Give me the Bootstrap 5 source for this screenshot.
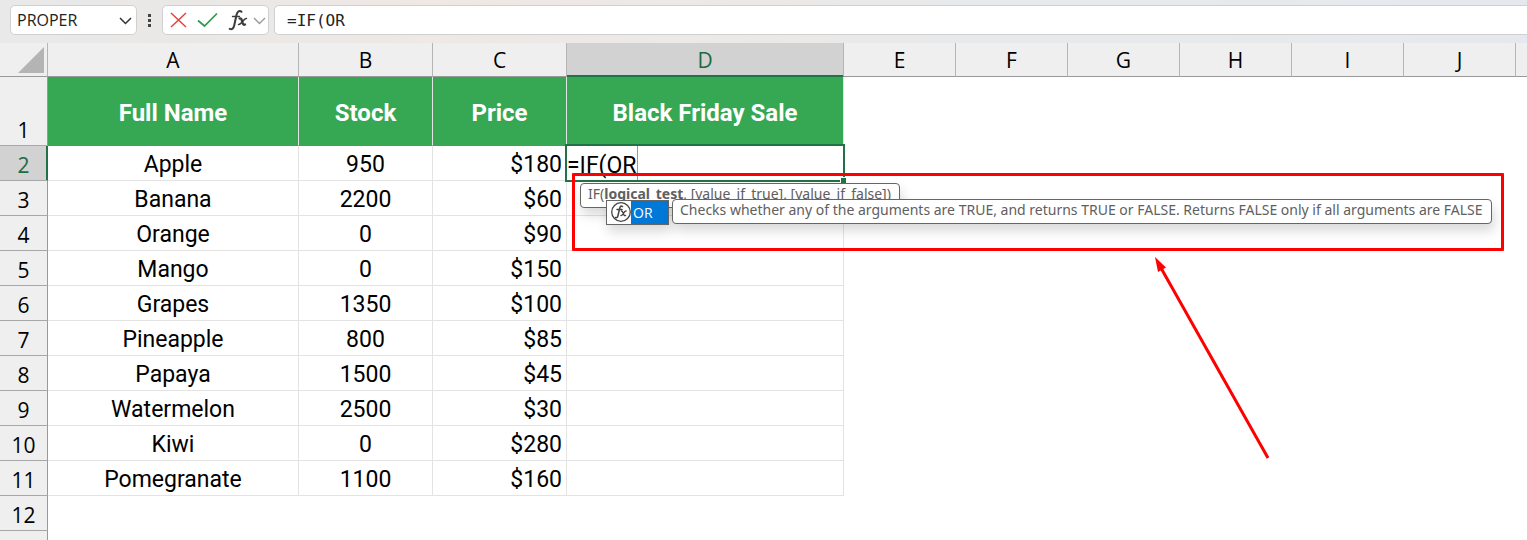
<!DOCTYPE html>
<html lang="en">
<head>
<meta charset="utf-8">
<meta name="viewport" content="width=device-width, initial-scale=1">
<title>Black Friday stock</title>
<link href="https://cdn.jsdelivr.net/npm/bootstrap@5.3.0/dist/css/bootstrap.min.css" rel="stylesheet">
<style>
  body { font-family: "Open Sans", "Noto Sans", sans-serif; color: #000; overflow: hidden; }

  .formula-bar {
    height: 43px; padding: 5px 0 8px 10px;
    background: linear-gradient(90deg, #e9e9e9 0, #eae8e7 12%, #efe8e4 28%, #ece9e7 45%, #e8e9eb 65%, #e5e9ee 100%);
  }
  .bar-box { background: #fff; border: 1px solid #d0d0d0; border-radius: 5px; height: 30px; }
  .bar-box input, .cell-edit input { border: 0; outline: 0; background: none; padding: 0; min-width: 0; color: #222; }
  .bar-box button { border: 0; background: none; padding: 0; line-height: 0; }
  .name-box { width: 127px; padding: 0 4px 0 6px; font-size: 16px; }
  .bar-dots { width: 25px; }
  .bar-tools { width: 107px; padding: 0 2px 0 7px; gap: 10px; }
  .tool-pair { gap: 5px; }
  .formula-box { margin-left: 5px; padding-left: 12px; border-right: 0; border-radius: 5px 0 0 5px; }
  .formula-box input { font: 16px "DejaVu Sans Mono", monospace; }

  .sheet { table-layout: fixed; width: 100%; border-collapse: separate; border-spacing: 0; }
  .sheet th, .sheet td { padding: 0; line-height: 30px; white-space: nowrap; }
  .sheet thead th {
    height: 34px; background: #efefef; font-size: 21px; font-weight: 400; text-align: center;
    border-right: 1px solid #b5b5b5; border-bottom: 1px solid #999;
  }
  .sheet thead th:last-child { border-right: 0; }
  .sheet tbody th {
    height: 35px; background: #efefef; font-size: 21px; font-weight: 400; text-align: center;
    vertical-align: bottom; border-right: 1px solid #999; border-bottom: 1px solid #a8a8a8;
  }
  .sheet thead th.col-on { background: #d2d2d2; color: #1e6a43; border-bottom-color: #217346; box-shadow: inset 0 -1px #217346; }
  .sheet tbody th.row-on { background: #d2d2d2; color: #1e6a43; border-right-color: #217346; box-shadow: inset -1px 0 #217346; }
  .sheet td { font: 23px/30px Roboto, sans-serif; }
  .sheet td.grid-cell { padding-top: 4px; border-right: 1px solid #e3e3e3; border-bottom: 1px solid #e3e3e3; text-align: center; }
  .sheet td.money { text-align: right; padding-right: 4px; }
  .sheet tr.titles > * { height: 69px; }
  .sheet tr.titles td.grid-cell { background: #36a854; color: #fff; font-size: 24px; font-weight: 700; border-bottom-color: #36a854; }
  .corner svg { display: block; margin: 0 3px 0 auto; }

  .edit-cell { position: relative; }
  .cell-edit { position: absolute; inset: -2px -2px -2px -2px; border: 2px solid #217346; background: #fff; }
  .cell-edit::after { content: ""; position: absolute; right: -3px; bottom: -3px; width: 5px; height: 5px; background: #217346; border: solid #fff; border-width: 1px 0 0 1px; box-sizing: content-box; }
  .cell-edit input { width: 71px; height: 34px; padding-top: 4px; font: 23px/30px Roboto, sans-serif; border-right: 1px solid #999; color: #000; }

  .tip { position: absolute; z-index: 2; height: 25px; background: #fff; border: 1px solid #666; border-radius: 4px; box-shadow: 2px 7px 12px rgba(0,0,0,.15); color: #606060; font: 14px/20px "Noto Sans", sans-serif; padding: 0 8px 0 7px; text-align: left; white-space: nowrap; }
  .tip-syntax { left: 13px; top: 37px; }
  .tip-help { left: 105px; top: 53px; z-index: 4; }
  .suggest { position: absolute; z-index: 3; left: 39px; top: 54px; width: 63px; height: 25px; background: #fff; border: 1px solid #666; box-shadow: 2px 7px 12px rgba(0,0,0,.15); }
  .suggest button { border: 0; padding: 0; background: none; width: 100%; height: 100%; }
  .suggest-name { background: #0078d7; color: #fff; font: 14px/23px "Open Sans", sans-serif; padding-left: 2px; text-align: left; }
  .callout-box { position: absolute; z-index: 5; left: 5px; top: 27px; width: 932px; height: 78px; border: 3px solid #f00; border-radius: 1px; pointer-events: none; }
  .callout-arrow { position: absolute; z-index: 5; left: 583px; top: 108px; pointer-events: none; }
</style>
<script src="https://cdn.jsdelivr.net/npm/bootstrap@5.3.0/dist/js/bootstrap.bundle.min.js"></script>
</head>
<body>
<header class="formula-bar d-flex">
  <div class="bar-box name-box d-flex align-items-center">
    <input class="flex-grow-1" type="text" value="PROPER" aria-label="Name box">
    <button type="button" aria-label="Open name list"><svg width="13" height="10" viewBox="0 0 13 10" fill="none" stroke="#333" stroke-width="1.500"><path d="M1 3l5.500 5.500L12 3"/></svg></button>
  </div>
  <div class="bar-dots d-flex align-items-center justify-content-center">
    <svg width="3" height="13" fill="#444"><path d="M0 0h3v3H0zM0 5h3v3H0zM0 10h3v3H0z"/></svg>
  </div>
  <div class="bar-box bar-tools d-flex align-items-center">
    <button type="button" aria-label="Cancel"><svg width="17" height="16" viewBox="0 0 17 16" fill="none" stroke="#e8413c" stroke-width="1.500"><path d="M1 1l15 14M16 1 1 15"/></svg></button>
    <button type="button" aria-label="Enter"><svg width="21" height="16" viewBox="0 0 21 16" fill="none" stroke="#2f9a4c" stroke-width="1.700"><path d="M1 8.500 7.500 14 20 1.500"/></svg></button>
    <div class="tool-pair d-flex align-items-center">
      <button type="button" aria-label="Insert function"><svg width="20" height="22" viewBox="0 0 20 22" fill="none" stroke="#3b3b3b" stroke-linecap="round"><path stroke-width="2" d="M13.500 2.800C11.500 1 9.300 2.500 8.500 6L6.200 16.500C5.500 19.500 4 20.800 1.700 19.800"/><path stroke-width="1.400" d="M4.500 7.500h7"/><path stroke-width="2.300" d="M11.500 9.500c1.500-.5 2 .5 2.500 2.500s1 4.500 3 3.500"/><path stroke-width="1.500" d="M18.500 9.500c-2.500-1-5 6.500-8 6"/></svg></button>
      <button type="button" aria-label="More functions"><svg width="13" height="9" viewBox="0 0 13 9" fill="none" stroke="#999" stroke-width="1.400"><path d="M1 2l5.500 5.500L12 2"/></svg></button>
    </div>
  </div>
  <div class="bar-box formula-box d-flex align-items-center flex-grow-1">
    <input class="flex-grow-1" type="text" value="=IF(OR" aria-label="Formula bar">
  </div>
</header>

<main>
<table class="sheet">
  <colgroup>
    <col style="width:48px"><col style="width:251px"><col style="width:134px"><col style="width:134px"><col style="width:277px">
    <col style="width:112px"><col style="width:112px"><col style="width:112px"><col style="width:112px"><col style="width:112px"><col style="width:112px"><col>
  </colgroup>
  <thead>
    <tr>
      <th class="corner" aria-label="Select all"><svg width="26" height="26"><path d="M26 0v26H0z" fill="#b4b4b4"/></svg></th>
      <th>A</th><th>B</th><th>C</th><th class="col-on">D</th><th>E</th><th>F</th><th>G</th><th>H</th><th>I</th><th>J</th><th></th>
    </tr>
  </thead>
  <tbody>
    <tr class="titles"><th>1</th><td class="grid-cell">Full Name</td><td class="grid-cell">Stock</td><td class="grid-cell">Price</td><td class="grid-cell">Black Friday Sale</td></tr>
    <tr><th class="row-on">2</th><td class="grid-cell">Apple</td><td class="grid-cell">950</td><td class="grid-cell money">$180</td>
      <td class="grid-cell edit-cell">
        <div class="cell-edit d-flex"><input type="text" value="=IF(OR" aria-label="Cell D2"></div>
        <div class="tip tip-syntax">IF(<b>logical_test</b>, [value_if_true], [value_if_false])</div>
        <div class="suggest"><button class="d-flex" type="button">
          <svg width="24" height="23" viewBox="0 0 24 23" fill="none" stroke="#444" stroke-linecap="round"><circle cx="14" cy="11" r="9.300" stroke-width="1.300"/><path stroke-width="1.500" d="M15.500 5.500c-1.500-1-2.500 0-3 2.500l-1.500 6.500c-.4 2-1.200 2.500-2.500 2M10 8.500h5"/><path stroke-width="1.400" d="M14.500 10c2-.5 1.500 5.500 4 4.500M19 10c-2-.5-3 5-5 4.500"/></svg>
          <span class="suggest-name flex-grow-1">OR</span></button></div>
        <div class="tip tip-help">Checks whether any of the arguments are TRUE, and returns TRUE or FALSE. Returns FALSE only if all arguments are FALSE</div>
        <div class="callout-box"></div>
        <svg class="callout-arrow" width="124" height="208" viewBox="0 0 124 208"><path d="M118 204 11 14" stroke="#f00" stroke-width="3"/><path d="M5 3 16 13.500 8 18z" fill="#f00"/></svg>
      </td></tr>
    <tr><th>3</th><td class="grid-cell">Banana</td><td class="grid-cell">2200</td><td class="grid-cell money">$60</td><td class="grid-cell"></td></tr>
    <tr><th>4</th><td class="grid-cell">Orange</td><td class="grid-cell">0</td><td class="grid-cell money">$90</td><td class="grid-cell"></td></tr>
    <tr><th>5</th><td class="grid-cell">Mango</td><td class="grid-cell">0</td><td class="grid-cell money">$150</td><td class="grid-cell"></td></tr>
    <tr><th>6</th><td class="grid-cell">Grapes</td><td class="grid-cell">1350</td><td class="grid-cell money">$100</td><td class="grid-cell"></td></tr>
    <tr><th>7</th><td class="grid-cell">Pineapple</td><td class="grid-cell">800</td><td class="grid-cell money">$85</td><td class="grid-cell"></td></tr>
    <tr><th>8</th><td class="grid-cell">Papaya</td><td class="grid-cell">1500</td><td class="grid-cell money">$45</td><td class="grid-cell"></td></tr>
    <tr><th>9</th><td class="grid-cell">Watermelon</td><td class="grid-cell">2500</td><td class="grid-cell money">$30</td><td class="grid-cell"></td></tr>
    <tr><th>10</th><td class="grid-cell">Kiwi</td><td class="grid-cell">0</td><td class="grid-cell money">$280</td><td class="grid-cell"></td></tr>
    <tr><th>11</th><td class="grid-cell">Pomegranate</td><td class="grid-cell">1100</td><td class="grid-cell money">$160</td><td class="grid-cell"></td></tr>
    <tr><th>12</th><td></td></tr>
    <tr><th></th><td></td></tr>
  </tbody>
</table>
</main>
</body>
</html>
